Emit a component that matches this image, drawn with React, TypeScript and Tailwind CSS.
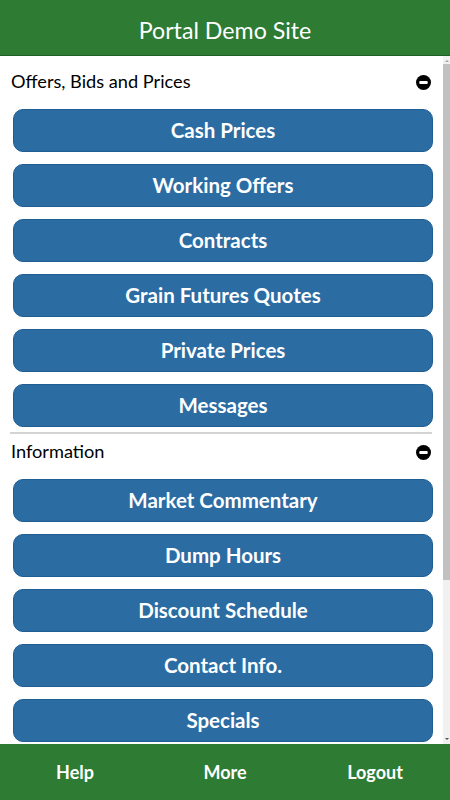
import React from 'react';

const offers = ['Cash Prices', 'Working Offers', 'Contracts', 'Grain Futures Quotes', 'Private Prices', 'Messages'];
const info = ['Market Commentary', 'Dump Hours', 'Discount Schedule', 'Contact Info.', 'Specials'];

function MinusCircle() {
  return (
    <svg width="15" height="15" viewBox="0 0 16 16" aria-hidden="true">
      <circle cx="8" cy="8" r="8" fill="#000" />
      <rect x="3.5" y="6.5" width="9" height="3" rx="1" fill="#fff" />
    </svg>
  );
}

function Section({ title, items }: { title: string; items: string[] }) {
  return (
    <div>
      <div className="h-[36px] pl-[11px] pr-[12px] flex items-center justify-between">
        <span className="text-[18.2px] text-black">{title}</span>
        <MinusCircle />
      </div>
      <div className="mt-[9px] pl-[13px] pr-[10px] flex flex-col gap-[12px]">
        {items.map((item) => (
          <button
            key={item}
            className="h-[43px] w-full rounded-[10px] bg-[#2b6ca3] border border-[#1f5d93] text-white font-bold text-[20.5px] flex items-center justify-center"
          >
            {item}
          </button>
        ))}
      </div>
    </div>
  );
}

// static stand-in for the native scrollbar
function ScrollBar() {
  return (
    <div className="w-[7px] shrink-0 bg-[#f1f1f1] flex flex-col items-center">
      <span className="mt-[4px] w-0 h-0 border-l-[2px] border-r-[2px] border-b-[2px] border-l-transparent border-r-transparent border-b-[#a3a3a3]" />
      <div className="mt-[2px] w-[7px] h-[516px] bg-[#c1c1c1]" />
      <div className="flex-1" />
      <span className="mb-[4px] w-0 h-0 border-l-[2px] border-r-[2px] border-t-[2px] border-l-transparent border-r-transparent border-t-[#505050]" />
    </div>
  );
}

export default function App() {
  return (
    <div className="h-[800px] w-[450px] flex flex-col bg-white" style={{ fontFamily: 'Lato, "Open Sans", sans-serif' }}>
      {/* Header */}
      <div className="h-[56px] shrink-0 bg-[#2e7b34] border-b border-[#1f5f24] flex items-center justify-center">
        <h1 className="text-white text-[23.2px] pt-[6px]">Portal Demo Site</h1>
      </div>

      {/* Menu */}
      <div className="flex-1 min-h-0 flex">
        <div className="flex-1 overflow-hidden pt-[8px]">
          <Section title="Offers, Bids and Prices" items={offers} />
          <div className="mt-[5px] ml-[10px] mr-[11px] h-[2px] bg-[#d4d4d4]" />
          <Section title="Information" items={info} />
        </div>
        <ScrollBar />
      </div>

      {/* Footer */}
      <div className="h-[56px] shrink-0 bg-[#2e7b34] grid grid-cols-3 items-center text-white font-bold text-[18px]">
        <span className="text-center">Help</span>
        <span className="text-center">More</span>
        <span className="text-center">Logout</span>
      </div>
    </div>
  );
}
